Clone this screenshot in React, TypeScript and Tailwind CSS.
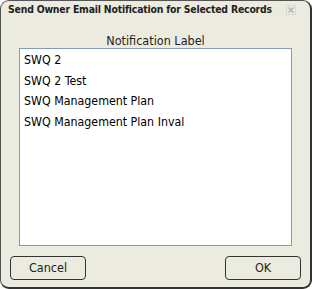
import React from 'react';

const items = ['SWQ 2', 'SWQ 2 Test', 'SWQ Management Plan', 'SWQ Management Plan Inval'];

function CloseIcon() {
  return (
    <svg width="10" height="10" viewBox="0 0 10 10" className="block">
      <rect x="0.5" y="0.5" width="9" height="9" fill="none" stroke="#c8c8c8" strokeDasharray="1 1" />
      <path d="M2.5 2.5 L7.5 7.5 M7.5 2.5 L2.5 7.5" stroke="#b0b0b0" strokeWidth="1.2" />
    </svg>
  );
}

export default function App() {
  return (
    <div
      className="w-[312px] h-[289px] bg-white"
      style={{ fontFamily: '"DejaVu Sans Condensed", "DejaVu Sans", sans-serif' }}
    >
      <div className="w-full h-full flex flex-col bg-[#ecebdf] border border-[#555] border-r-2 border-b-2 border-r-[#333] border-b-[#333] rounded-[9px]">
        <div className="flex items-center justify-between h-[17px] pl-[7px] pr-[14px]">
          <span className="text-[10.4px] tracking-[-0.2px] font-bold text-[#222] leading-none whitespace-nowrap">
            Send Owner Email Notification for Selected Records
          </span>
          <CloseIcon />
        </div>
        <div className="flex flex-col flex-1 px-[18px]">
          <div className="text-center text-[12.5px] text-[#222] mt-[15px] h-[15px] leading-[15px]">
            Notification Label
          </div>
          <div className="h-[198px] bg-white border border-[#7f9db9] pt-[1px] px-[4px]">
            {items.map((it) => (
              <div key={it} className="h-[20.5px] leading-[20px] text-[12.3px] text-black">
                {it}
              </div>
            ))}
          </div>
        </div>
        <div className="flex justify-between px-[9px] pt-[10px] pb-[7px]">
          <button className="w-[76px] h-[24px] border border-[#333] rounded-[4px] text-[12.5px] text-[#222] bg-[#ecebdf]">
            Cancel
          </button>
          <button className="w-[76px] h-[24px] border border-[#333] rounded-[4px] text-[12.5px] text-[#222] bg-[#ecebdf]">
            OK
          </button>
        </div>
      </div>
    </div>
  );
}
